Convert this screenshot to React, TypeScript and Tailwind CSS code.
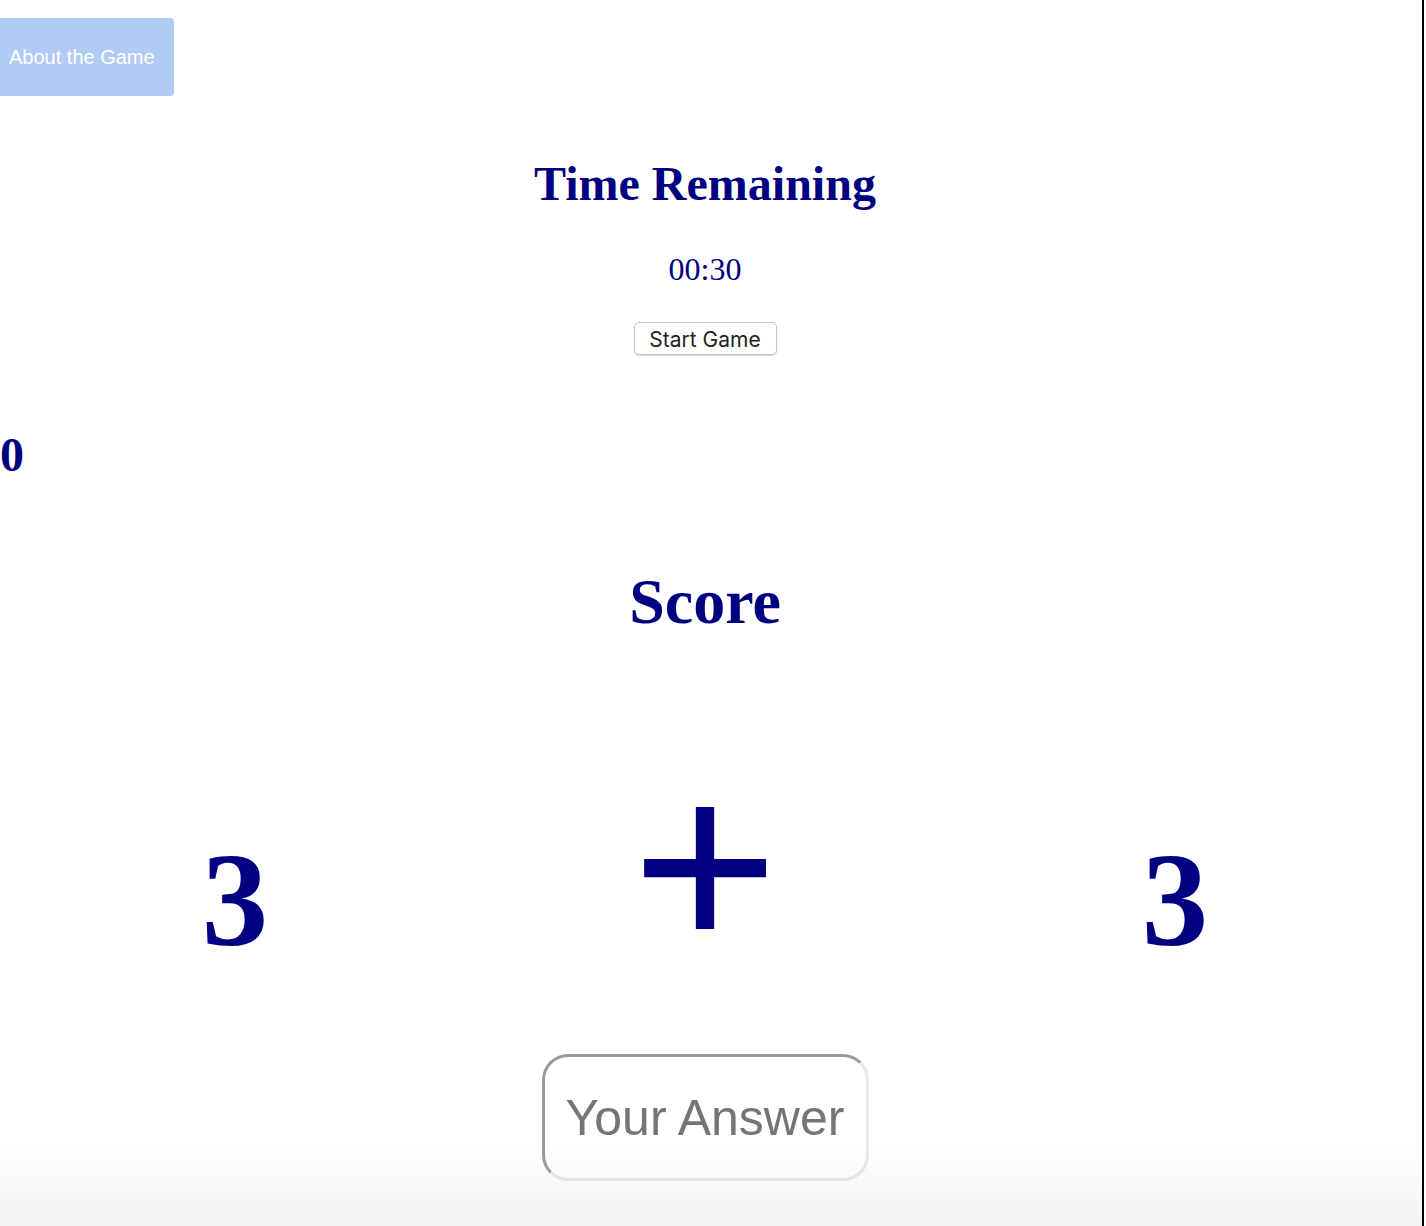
import React from 'react';

const serif = "font-['Liberation_Serif','Times_New_Roman',serif]";

export default function App() {
  return (
    <div className="relative min-h-[1226px] w-[1424px] border-r-2 border-black bg-white overflow-hidden">
      <div className="w-[1410px] flex flex-col">
        {/* About button */}
        <div className="mt-[18px]">
          <button className="w-[174px] h-[78px] pl-[9px] text-left rounded-r-[4px] bg-[#b1caf6] text-white text-[20px] font-['Liberation_Sans',Arial,sans-serif]">
            About the Game
          </button>
        </div>

        {/* Timer */}
        <h1 className={`${serif} mt-[64px] text-center text-[48px] leading-none font-bold text-[#000080]`}>
          Time Remaining
        </h1>
        <p className={`${serif} mt-[45px] text-center text-[32px] leading-none text-[#000080]`}>00:30</p>
        <div className="mt-[37px] flex justify-center">
          <button className="w-[143px] h-[33px] pt-[2px] rounded-[5px] border border-[#c6c6c6] bg-white shadow-[0_1px_1px_rgba(0,0,0,0.15)] text-[21px] leading-none text-[#222] font-['Inter',sans-serif]">
            Start Game
          </button>
        </div>

        {/* Score */}
        <div className={`${serif} mt-[76px] text-[48px] leading-none font-bold text-[#000080]`}>0</div>
        <h1 className={`${serif} mt-[91px] text-center text-[64px] leading-none font-bold text-[#000080]`}>
          Score
        </h1>

        {/* Problem */}
        <div className={`${serif} mt-[77px] grid grid-cols-3 items-start font-bold text-[#000080]`}>
          <div className="pt-[123px] text-center text-[133px] leading-none">3</div>
          <div className="pt-[25px] text-center text-[262px] leading-none">+</div>
          <div className="pt-[123px] text-center text-[133px] leading-none">3</div>
        </div>

        {/* Answer */}
        <div className="mt-[56px] flex justify-center">
          <input
            type="text"
            placeholder="Your Answer"
            className="w-[327px] h-[127px] px-[21px] rounded-[26px] border-[3px] border-t-[#9b9b9b] border-l-[#9b9b9b] border-b-[#e9e9e9] border-r-[#e9e9e9] bg-white text-[50px] text-[#333] placeholder:text-[#757575] font-['Liberation_Sans',Arial,sans-serif] outline-none"
          />
        </div>
      </div>

      {/* bottom fade over the page */}
      <div className="pointer-events-none absolute bottom-0 left-0 w-[1422px] h-[80px] bg-linear-to-b from-transparent to-black/[0.05]" />
    </div>
  );
}
